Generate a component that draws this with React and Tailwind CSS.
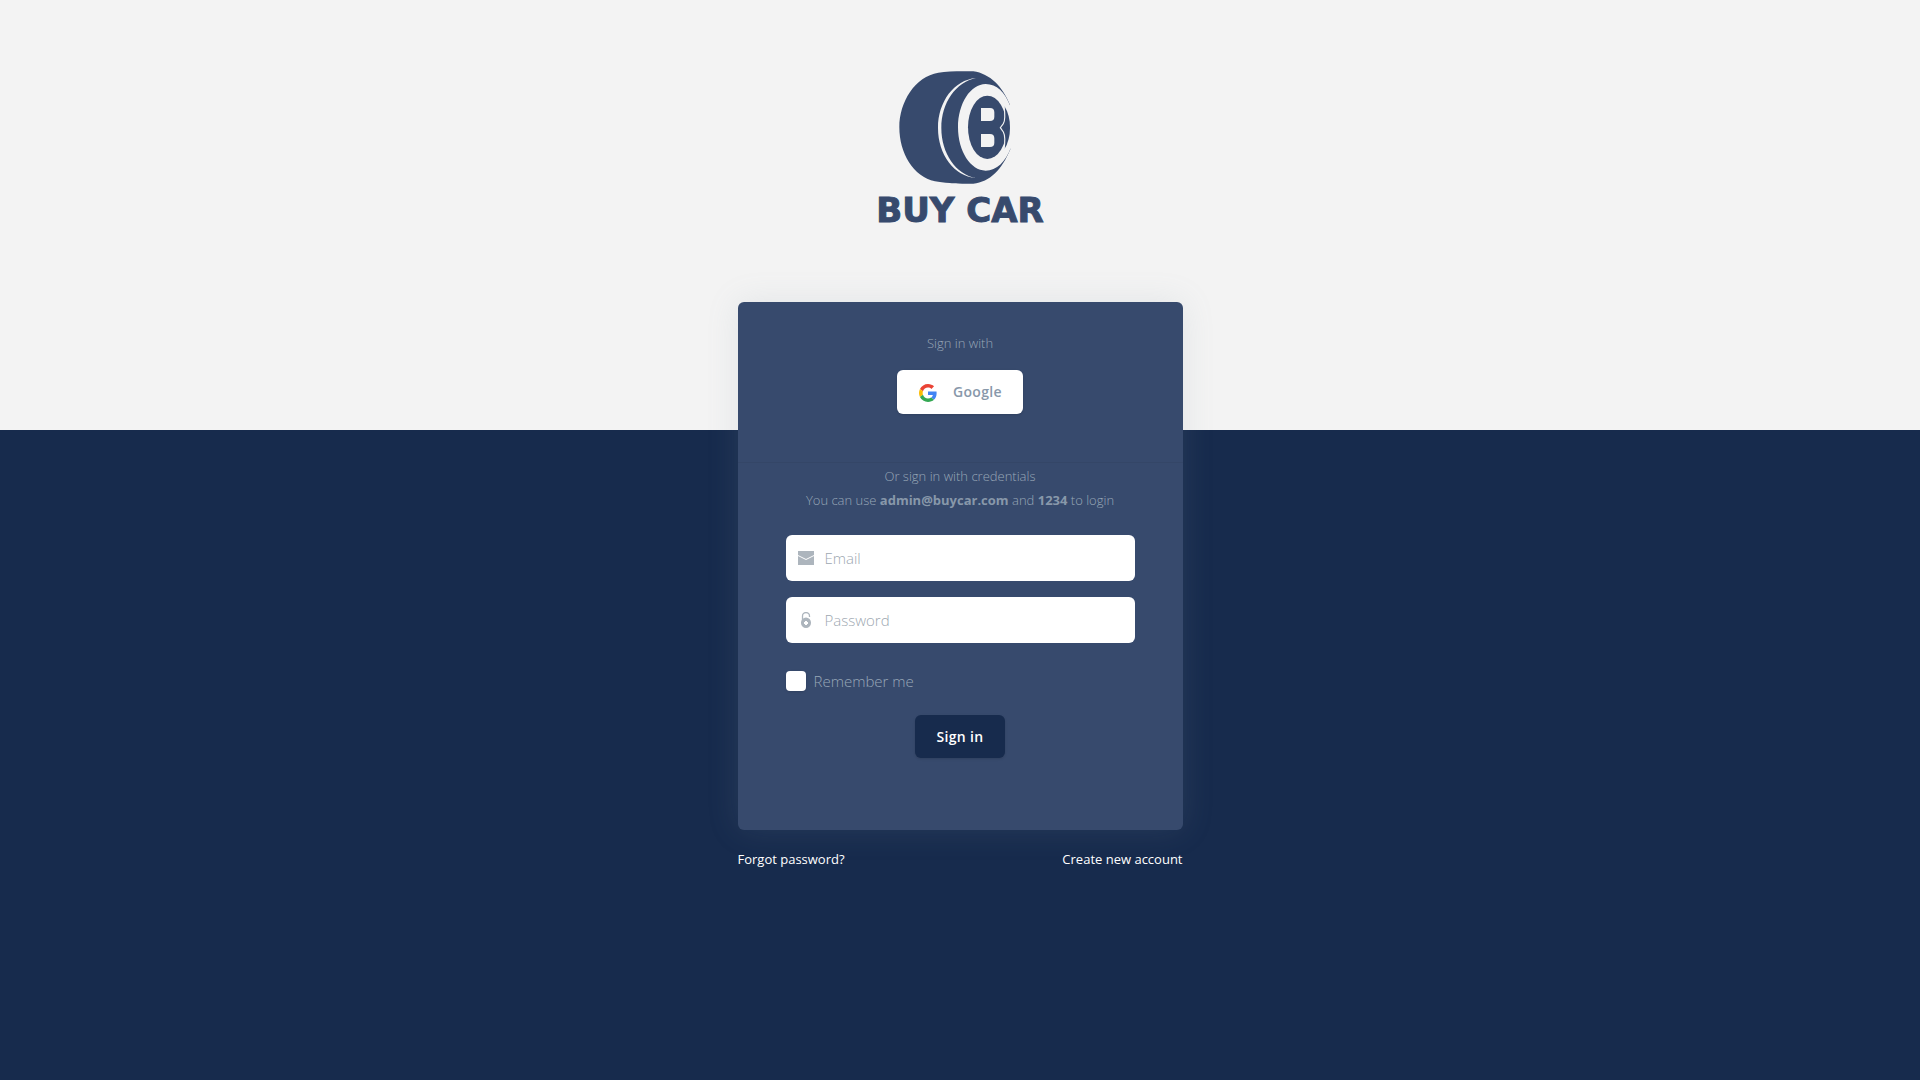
function Logo() {
  return (
    <div className="flex flex-col items-center text-[#374a6d]">
      <svg viewBox="15 0 390 390" className="size-[130px]" aria-hidden="true">
        <path
          fill="currentColor"
          d="M145 38C175 33 220 33 250 34C300 41 338 80 360 135C358 160 358 245 361 268C335 330 300 366 250 371C220 373 165 370 135 364C70 350 28 280 28 202C28 125 75 50 145 38Z"
        />
        <path
          fill="#f3f3f3"
          d="M258 54C192 60 144 125 144 204C144 283 192 349 258 354C198 344 154 280 154 204C154 128 198 66 258 54Z"
        />
        <path
          fill="#f3f3f3"
          d="M361 138C345 97 320 72 287 72C242 72 204 130 204 202C204 274 242 332 287 332C320 332 347 306 363 262L390 262V138Z"
        />
        <ellipse cx="292" cy="202" rx="58" ry="95" fill="currentColor" />
        <path fill="currentColor" d="M343 138Q360 165 360 203Q360 240 343 268Z" />
        <path
          fill="none"
          stroke="#f3f3f3"
          strokeWidth="3.5"
          d="M342 136C345 160 345 184 340 191L331 203L340 216C345 225 345 248 342 270"
        />
        <path
          fill="#f3f3f3"
          d="M273 144H300Q313 144 313 157V170Q313 183 300 183H273ZM273 222H300Q313 222 313 235V248Q313 261 300 261H273Z"
        />
      </svg>
      <span className="font-['DejaVu_Sans',sans-serif] text-[34px] leading-[40px] font-bold [-webkit-text-stroke:1px_currentColor]">
        BUY CAR
      </span>
    </div>
  );
}

function GoogleIcon() {
  return (
    <svg viewBox="0 0 48 48" className="mt-0.5 size-[18px]" aria-hidden="true">
      <path fill="#EA4335" d="M24 9.5c3.54 0 6.71 1.22 9.21 3.6l6.85-6.85C35.9 2.38 30.47 0 24 0 14.62 0 6.51 5.38 2.56 13.22l7.98 6.19C12.43 13.72 17.74 9.5 24 9.5z" />
      <path fill="#4285F4" d="M46.98 24.55c0-1.57-.15-3.09-.38-4.55H24v9.02h12.94c-.58 2.96-2.26 5.48-4.78 7.18l7.73 6c4.51-4.18 7.09-10.36 7.09-17.65z" />
      <path fill="#FBBC05" d="M10.53 28.59c-.48-1.45-.76-2.99-.76-4.59s.27-3.14.76-4.59l-7.98-6.19C.92 16.46 0 20.12 0 24c0 3.88.92 7.54 2.56 10.78l7.97-6.19z" />
      <path fill="#34A853" d="M24 48c6.48 0 11.93-2.13 15.89-5.81l-7.73-6c-2.15 1.45-4.92 2.3-8.16 2.3-6.26 0-11.57-4.22-13.47-9.91l-7.98 6.19C6.51 42.62 14.62 48 24 48z" />
    </svg>
  );
}

function MailIcon() {
  return (
    <svg viewBox="0 0 16 16" className="size-4" fill="currentColor" aria-hidden="true">
      <path d="M0 1h16v4L8 9 0 5z" />
      <path d="M0 6l8 4 8-4v9H0z" />
    </svg>
  );
}

function LockIcon() {
  return (
    <svg viewBox="0 0 16 16" className="size-4" aria-hidden="true">
      <path d="M4.500 8V4a3.500 3.500 0 0 1 7 0v1" fill="none" stroke="currentColor" strokeWidth="1.300" />
      <path
        fill="currentColor"
        fillRule="evenodd"
        d="M8 5.500a5 5.200 0 1 0 0 10.500a5 5.200 0 1 0 0-10.500ZM7 9h2v1h1v2H9v1H7v-1H6v-2h1z"
      />
    </svg>
  );
}

function Field({ id, label, type, icon }) {
  return (
    <div className="flex h-[46px] items-center rounded-md bg-white text-[#adb5bd]">
      <label htmlFor={id} aria-label={label} className="pr-[11px] pl-3">
        {icon}
      </label>
      <input
        id={id}
        type={type}
        placeholder={label}
        className="h-full min-w-0 flex-1 rounded-r-md bg-transparent pr-3 text-[15px] font-light text-[#8898aa] outline-none placeholder:text-[#9da7b0]"
      />
    </div>
  );
}

export default function App() {
  return (
    <div className="min-h-screen bg-[linear-gradient(#f3f3f3_430px,#172b4d_430px)] font-['Open_Sans',sans-serif] text-[#98a7b7]">
      <header className="flex justify-center pt-[60px] pb-[72px]">
        <Logo />
      </header>
      <main className="mx-auto w-full max-w-[445px]">
        <section className="rounded-md bg-[#374a6d] shadow-[0_0_32px_rgba(136,152,170,0.15)]">
          <div className="flex flex-col items-center border-b border-black/5 pt-[31px] pb-12 text-center">
            <p className="mb-[17px] text-[13px] leading-5 font-light">Sign in with</p>
            <button
              type="button"
              className="flex h-11 items-center gap-4 rounded-md bg-white pr-[21px] pl-[22px] text-sm font-semibold tracking-wide text-[#8898aa] shadow-sm"
            >
              <GoogleIcon />
              Google
            </button>
          </div>
          <div className="px-12 pb-[72px]">
            <p className="pt-px pb-[23px] text-center text-[13px] leading-6 font-light whitespace-nowrap">
              Or sign in with credentials
              <br />
              You can use <b className="font-bold text-[#8898aa]">admin@buycar.com</b> and{" "}
              <b className="font-bold text-[#8898aa]">1234</b> to login
            </p>
            <form onSubmit={(e) => e.preventDefault()}>
              <div className="flex flex-col gap-4">
                <Field id="email" label="Email" type="email" icon={<MailIcon />} />
                <Field id="password" label="Password" type="password" icon={<LockIcon />} />
              </div>
              <div className="mt-7 flex items-center gap-2">
                <input
                  id="remember"
                  type="checkbox"
                  className="size-5 appearance-none rounded bg-white shadow-sm checked:bg-[#172b4d]"
                />
                <label htmlFor="remember" className="text-[15px] leading-5 font-light">
                  Remember me
                </label>
              </div>
              <div className="mt-6 flex justify-center">
                <button
                  type="submit"
                  className="h-[43px] rounded-md bg-[#172b4d] px-[21px] text-sm font-semibold tracking-wide text-white shadow-sm"
                >
                  Sign in
                </button>
              </div>
            </form>
          </div>
        </section>
        <nav className="flex justify-between pt-[19px] text-[13px] leading-5 text-white">
          <a href="#forgot">Forgot password?</a>
          <a href="#register">Create new account</a>
        </nav>
      </main>
    </div>
  );
}
